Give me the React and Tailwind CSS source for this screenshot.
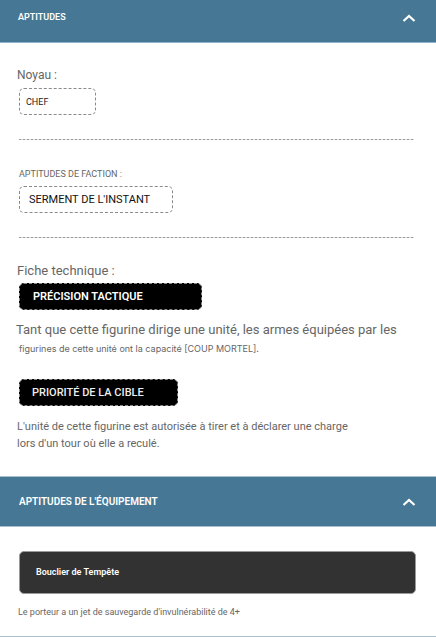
import { useState } from "react";

function Chevron({ open }) {
  return (
    <svg
      viewBox="0 0 14 10"
      className={open ? "h-[10px] w-[14px]" : "h-[10px] w-[14px] rotate-180"}
      fill="none"
      stroke="currentColor"
      strokeWidth="2.2"
      aria-hidden="true"
    >
      <path d="M1.5 8 7 3l5.5 5" />
    </svg>
  );
}

function Tag({ className, children }) {
  return (
    <button
      type="button"
      className={`ml-[2px] flex h-[27px] items-center rounded-[5px] border border-dashed border-[#8a8a8a] pt-[2px] text-left ${className}`}
    >
      {children}
    </button>
  );
}

function Divider() {
  return (
    <hr className="mr-[5px] ml-[2px] h-px border-0 bg-[repeating-linear-gradient(90deg,#999999_0_2px,#dddddd_2px_4px)]" />
  );
}

export default function App() {
  const [abilities, setAbilities] = useState(true);
  const [wargear, setWargear] = useState(true);

  return (
    <main className="bg-white font-['Roboto','Inter',sans-serif] text-[#666666]">
      <section>
        <h2>
          <button
            type="button"
            aria-expanded={abilities}
            onClick={() => setAbilities(!abilities)}
            className="flex h-[43px] w-full items-center justify-between border-b border-[#8fb4cf] bg-[#467895] pr-[20px] pb-[6px] pl-[18px] text-white"
          >
            <span className="text-[9px] font-semibold">APTITUDES</span>
            <Chevron open={abilities} />
          </button>
        </h2>
        {abilities && (
          <div className="px-[17px] pt-[24px] pb-[24px]">
            <h3 className="mb-[5px] text-[12px] leading-[16px]">Noyau :</h3>
            <Tag className="w-[77px] px-[6px] text-[9px] text-[#222222]">CHEF</Tag>
            <div className="my-[24px]">
              <Divider />
            </div>
            <h3 className="mb-[4px] ml-[2px] pt-[2px] text-[9px] leading-[16px]">APTITUDES DE FACTION :</h3>
            <Tag className="w-[154px] px-[9px] text-[11px] text-[#111111]">SERMENT DE L'INSTANT</Tag>
            <div className="my-[24px]">
              <Divider />
            </div>
            <h3 className="mb-[4px] pt-px text-[13px] leading-[16px]">Fiche technique :</h3>
            <Tag className="w-[183px] bg-black px-[13px] text-[11px] font-semibold text-white">PRÉCISION TACTIQUE</Tag>
            <p className="-mx-px mt-[10px] text-[13px] leading-[20px]">
              Tant que cette figurine dirige une unité, les armes équipées par les
              <span className="ml-[3px] block font-['Inter','Roboto',sans-serif] text-[9px] leading-[18px]">
                figurines de cette unité ont la capacité [COUP MORTEL].
              </span>
            </p>
            <div className="mt-[21px]">
              <Tag className="w-[159px] bg-black px-[12px] text-[11px] font-medium text-[#eeeeee]">
                PRIORITÉ DE LA CIBLE
              </Tag>
            </div>
            <p className="mt-[12px] text-[11px] leading-[17px]">
              L'unité de cette figurine est autorisée à tirer et à déclarer une charge
              <br />
              lors d'un tour où elle a reculé.
            </p>
          </div>
        )}
      </section>
      <section className="border-b border-[#a9bfcc]">
        <h2>
          <button
            type="button"
            aria-expanded={wargear}
            onClick={() => setWargear(!wargear)}
            className="flex h-[51px] w-full items-center justify-between border-y border-[#a9c0cd] bg-[#467895] pr-[20px] pl-[19px] text-white"
          >
            <span className="text-[10px] font-semibold">APTITUDES DE L'ÉQUIPEMENT</span>
            <Chevron open={wargear} />
          </button>
        </h2>
        {wargear && (
          <div className="px-[18px] pt-[24px] pb-[16px]">
            <div className="mr-[2px] ml-px">
              <button
                type="button"
                className="flex h-[43px] w-full items-center rounded-[5px] border border-[#999999] bg-[#323232] px-[16px] text-left text-[9px] font-semibold text-white"
              >
                Bouclier de Tempête
              </button>
            </div>
            <p className="mt-[10px] text-[9px] leading-[16px]">
              Le porteur a un jet de sauvegarde d'invulnérabilité de 4+
            </p>
          </div>
        )}
      </section>
    </main>
  );
}
